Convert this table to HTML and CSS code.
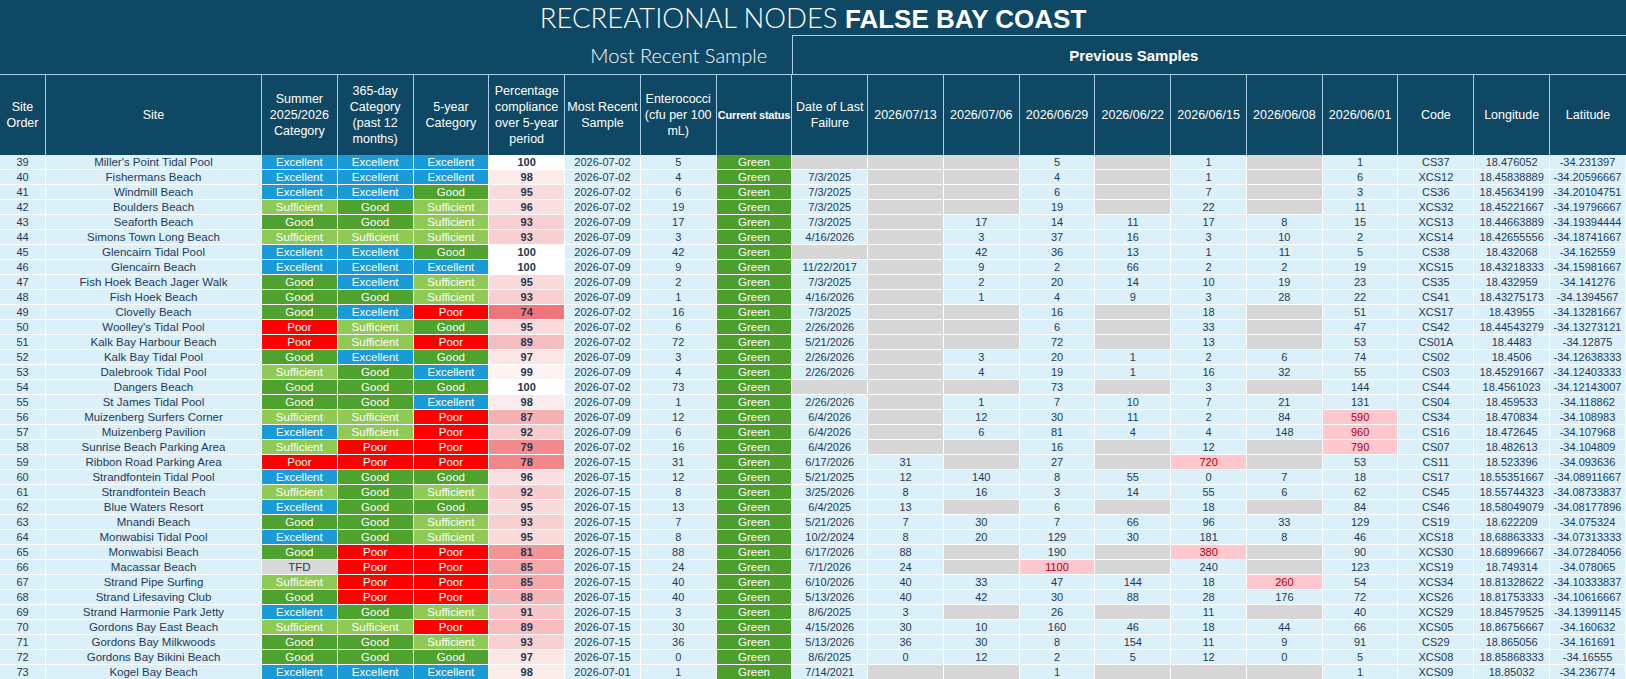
FILE: index.html
```html
<!DOCTYPE html>
<html lang="en">
<head>
<meta charset="utf-8">
<title>Recreational Nodes False Bay Coast</title>
<link rel="stylesheet" href="styles.css">
</head>
<body>
<table class="sheet">
<colgroup><col class="c-ord"><col class="c-site"><col span="18"></colgroup>
<thead>
<tr class="r-title"><th colspan="20" class="title"><span class="light">RECREATIONAL NODES </span><b>FALSE BAY COAST</b></th></tr>
<tr class="r-sub"><th colspan="6" class="blank"></th><th colspan="3" class="mrs">Most Recent Sample</th><th colspan="9" class="prev">Previous Samples</th><th colspan="2" class="prev-end"></th></tr>
<tr class="r-head">
<th>Site<br>Order</th><th>Site</th><th>Summer<br>2025/2026<br>Category</th><th>365-day<br>Category<br>(past 12<br>months)</th><th>5-year<br>Category</th><th>Percentage<br>compliance<br>over 5-year<br>period</th><th>Most Recent<br>Sample</th><th>Enterococci<br>(cfu per 100<br>mL)</th><th class="cur">Current status</th><th>Date of Last<br>Failure</th><th>2026/07/13</th><th>2026/07/06</th><th>2026/06/29</th><th>2026/06/22</th><th>2026/06/15</th><th>2026/06/08</th><th>2026/06/01</th><th>Code</th><th>Longitude</th><th class="last">Latitude</th>
</tr>
</thead>
<tbody>
<tr><td>39</td><td class="site">Miller's Point Tidal Pool</td><td class="ex">Excellent</td><td class="ex">Excellent</td><td class="ex">Excellent</td><td class="pc" style="background:#ffffff">100</td><td>2026-07-02</td><td>5</td><td class="st">Green</td><td class="na"></td><td class="na"></td><td class="na"></td><td>5</td><td class="na"></td><td>1</td><td class="na"></td><td>1</td><td>CS37</td><td>18.476052</td><td>-34.231397</td></tr>
<tr><td>40</td><td class="site">Fishermans Beach</td><td class="ex">Excellent</td><td class="ex">Excellent</td><td class="ex">Excellent</td><td class="pc" style="background:#fcebeb">98</td><td>2026-07-02</td><td>4</td><td class="st">Green</td><td>7/3/2025</td><td class="na"></td><td class="na"></td><td>4</td><td class="na"></td><td>1</td><td class="na"></td><td>6</td><td>XCS12</td><td>18.45838889</td><td>-34.20596667</td></tr>
<tr><td>41</td><td class="site">Windmill Beach</td><td class="ex">Excellent</td><td class="ex">Excellent</td><td class="gd">Good</td><td class="pc" style="background:#fadbdc">95</td><td>2026-07-02</td><td>6</td><td class="st">Green</td><td>7/3/2025</td><td class="na"></td><td class="na"></td><td>6</td><td class="na"></td><td>7</td><td class="na"></td><td>3</td><td>CS36</td><td>18.45634199</td><td>-34.20104751</td></tr>
<tr><td>42</td><td class="site">Boulders Beach</td><td class="sf">Sufficient</td><td class="gd">Good</td><td class="sf">Sufficient</td><td class="pc" style="background:#fbe0e1">96</td><td>2026-07-02</td><td>19</td><td class="st">Green</td><td>7/3/2025</td><td class="na"></td><td class="na"></td><td>19</td><td class="na"></td><td>22</td><td class="na"></td><td>11</td><td>XCS32</td><td>18.45221667</td><td>-34.19796667</td></tr>
<tr><td>43</td><td class="site">Seaforth Beach</td><td class="gd">Good</td><td class="gd">Good</td><td class="sf">Sufficient</td><td class="pc" style="background:#f9d0d1">93</td><td>2026-07-09</td><td>17</td><td class="st">Green</td><td>7/3/2025</td><td class="na"></td><td>17</td><td>14</td><td>11</td><td>17</td><td>8</td><td>15</td><td>XCS13</td><td>18.44663889</td><td>-34.19394444</td></tr>
<tr><td>44</td><td class="site">Simons Town Long Beach</td><td class="sf">Sufficient</td><td class="sf">Sufficient</td><td class="sf">Sufficient</td><td class="pc" style="background:#f9d0d1">93</td><td>2026-07-09</td><td>3</td><td class="st">Green</td><td>4/16/2026</td><td class="na"></td><td>3</td><td>37</td><td>16</td><td>3</td><td>10</td><td>2</td><td>XCS14</td><td>18.42655556</td><td>-34.18741667</td></tr>
<tr><td>45</td><td class="site">Glencairn Tidal Pool</td><td class="ex">Excellent</td><td class="ex">Excellent</td><td class="gd">Good</td><td class="pc" style="background:#ffffff">100</td><td>2026-07-09</td><td>42</td><td class="st">Green</td><td class="na"></td><td class="na"></td><td>42</td><td>36</td><td>13</td><td>1</td><td>11</td><td>5</td><td>CS38</td><td>18.432068</td><td>-34.162559</td></tr>
<tr><td>46</td><td class="site">Glencairn Beach</td><td class="ex">Excellent</td><td class="ex">Excellent</td><td class="ex">Excellent</td><td class="pc" style="background:#ffffff">100</td><td>2026-07-09</td><td>9</td><td class="st">Green</td><td>11/22/2017</td><td class="na"></td><td>9</td><td>2</td><td>66</td><td>2</td><td>2</td><td>19</td><td>XCS15</td><td>18.43218333</td><td>-34.15981667</td></tr>
<tr><td>47</td><td class="site">Fish Hoek Beach Jager Walk</td><td class="gd">Good</td><td class="ex">Excellent</td><td class="sf">Sufficient</td><td class="pc" style="background:#fadbdc">95</td><td>2026-07-09</td><td>2</td><td class="st">Green</td><td>7/3/2025</td><td class="na"></td><td>2</td><td>20</td><td>14</td><td>10</td><td>19</td><td>23</td><td>CS35</td><td>18.432959</td><td>-34.141276</td></tr>
<tr><td>48</td><td class="site">Fish Hoek Beach</td><td class="gd">Good</td><td class="gd">Good</td><td class="sf">Sufficient</td><td class="pc" style="background:#f9d0d1">93</td><td>2026-07-09</td><td>1</td><td class="st">Green</td><td>4/16/2026</td><td class="na"></td><td>1</td><td>4</td><td>9</td><td>3</td><td>28</td><td>22</td><td>CS41</td><td>18.43275173</td><td>-34.1394567</td></tr>
<tr><td>49</td><td class="site">Clovelly Beach</td><td class="gd">Good</td><td class="ex">Excellent</td><td class="pr">Poor</td><td class="pc" style="background:#ef7678">74</td><td>2026-07-02</td><td>16</td><td class="st">Green</td><td>7/3/2025</td><td class="na"></td><td class="na"></td><td>16</td><td class="na"></td><td>18</td><td class="na"></td><td>51</td><td>XCS17</td><td>18.43955</td><td>-34.13281667</td></tr>
<tr><td>50</td><td class="site">Woolley's Tidal Pool</td><td class="pr">Poor</td><td class="sf">Sufficient</td><td class="gd">Good</td><td class="pc" style="background:#fadbdc">95</td><td>2026-07-02</td><td>6</td><td class="st">Green</td><td>2/26/2026</td><td class="na"></td><td class="na"></td><td>6</td><td class="na"></td><td>33</td><td class="na"></td><td>47</td><td>CS42</td><td>18.44543279</td><td>-34.13273121</td></tr>
<tr><td>51</td><td class="site">Kalk Bay Harbour Beach</td><td class="pr">Poor</td><td class="sf">Sufficient</td><td class="pr">Poor</td><td class="pc" style="background:#f7bcbd">89</td><td>2026-07-02</td><td>72</td><td class="st">Green</td><td>5/21/2026</td><td class="na"></td><td class="na"></td><td>72</td><td class="na"></td><td>13</td><td class="na"></td><td>53</td><td>CS01A</td><td>18.4483</td><td>-34.12875</td></tr>
<tr><td>52</td><td class="site">Kalk Bay Tidal Pool</td><td class="gd">Good</td><td class="ex">Excellent</td><td class="gd">Good</td><td class="pc" style="background:#fbe5e5">97</td><td>2026-07-09</td><td>3</td><td class="st">Green</td><td>2/26/2026</td><td class="na"></td><td>3</td><td>20</td><td>1</td><td>2</td><td>6</td><td>74</td><td>CS02</td><td>18.4506</td><td>-34.12638333</td></tr>
<tr><td>53</td><td class="site">Dalebrook Tidal Pool</td><td class="sf">Sufficient</td><td class="gd">Good</td><td class="ex">Excellent</td><td class="pc" style="background:#fdf3f3">99</td><td>2026-07-09</td><td>4</td><td class="st">Green</td><td>2/26/2026</td><td class="na"></td><td>4</td><td>19</td><td>1</td><td>16</td><td>32</td><td>55</td><td>CS03</td><td>18.45291667</td><td>-34.12403333</td></tr>
<tr><td>54</td><td class="site">Dangers Beach</td><td class="gd">Good</td><td class="gd">Good</td><td class="gd">Good</td><td class="pc" style="background:#ffffff">100</td><td>2026-07-02</td><td>73</td><td class="st">Green</td><td class="na"></td><td class="na"></td><td class="na"></td><td>73</td><td class="na"></td><td>3</td><td class="na"></td><td>144</td><td>CS44</td><td>18.4561023</td><td>-34.12143007</td></tr>
<tr><td>55</td><td class="site">St James Tidal Pool</td><td class="gd">Good</td><td class="gd">Good</td><td class="ex">Excellent</td><td class="pc" style="background:#fcebeb">98</td><td>2026-07-09</td><td>1</td><td class="st">Green</td><td>2/26/2026</td><td class="na"></td><td>1</td><td>7</td><td>10</td><td>7</td><td>21</td><td>131</td><td>CS04</td><td>18.459533</td><td>-34.118862</td></tr>
<tr><td>56</td><td class="site">Muizenberg Surfers Corner</td><td class="sf">Sufficient</td><td class="sf">Sufficient</td><td class="pr">Poor</td><td class="pc" style="background:#f6b2b3">87</td><td>2026-07-09</td><td>12</td><td class="st">Green</td><td>6/4/2026</td><td class="na"></td><td>12</td><td>30</td><td>11</td><td>2</td><td>84</td><td class="hi">590</td><td>CS34</td><td>18.470834</td><td>-34.108983</td></tr>
<tr><td>57</td><td class="site">Muizenberg Pavilion</td><td class="ex">Excellent</td><td class="sf">Sufficient</td><td class="pr">Poor</td><td class="pc" style="background:#f8cbcc">92</td><td>2026-07-09</td><td>6</td><td class="st">Green</td><td>6/4/2026</td><td class="na"></td><td>6</td><td>81</td><td>4</td><td>4</td><td>148</td><td class="hi">960</td><td>CS16</td><td>18.472645</td><td>-34.107968</td></tr>
<tr><td>58</td><td class="site">Sunrise Beach Parking Area</td><td class="sf">Sufficient</td><td class="pr">Poor</td><td class="pr">Poor</td><td class="pc" style="background:#f18c8e">79</td><td>2026-07-02</td><td>16</td><td class="st">Green</td><td>6/4/2026</td><td class="na"></td><td class="na"></td><td>16</td><td class="na"></td><td>12</td><td class="na"></td><td class="hi">790</td><td>CS07</td><td>18.482613</td><td>-34.104809</td></tr>
<tr><td>59</td><td class="site">Ribbon Road Parking Area</td><td class="pr">Poor</td><td class="pr">Poor</td><td class="pr">Poor</td><td class="pc" style="background:#f18789">78</td><td>2026-07-15</td><td>31</td><td class="st">Green</td><td>6/17/2026</td><td>31</td><td class="na"></td><td>27</td><td class="na"></td><td class="hi">720</td><td class="na"></td><td>53</td><td>CS11</td><td>18.523396</td><td>-34.093636</td></tr>
<tr><td>60</td><td class="site">Strandfontein Tidal Pool</td><td class="ex">Excellent</td><td class="gd">Good</td><td class="gd">Good</td><td class="pc" style="background:#fbe0e1">96</td><td>2026-07-15</td><td>12</td><td class="st">Green</td><td>5/21/2025</td><td>12</td><td>140</td><td>8</td><td>55</td><td>0</td><td>7</td><td>18</td><td>CS17</td><td>18.55351667</td><td>-34.08911667</td></tr>
<tr><td>61</td><td class="site">Strandfontein Beach</td><td class="sf">Sufficient</td><td class="gd">Good</td><td class="sf">Sufficient</td><td class="pc" style="background:#f8cbcc">92</td><td>2026-07-15</td><td>8</td><td class="st">Green</td><td>3/25/2026</td><td>8</td><td>16</td><td>3</td><td>14</td><td>55</td><td>6</td><td>62</td><td>CS45</td><td>18.55744323</td><td>-34.08733837</td></tr>
<tr><td>62</td><td class="site">Blue Waters Resort</td><td class="ex">Excellent</td><td class="gd">Good</td><td class="gd">Good</td><td class="pc" style="background:#fadbdc">95</td><td>2026-07-15</td><td>13</td><td class="st">Green</td><td>6/4/2025</td><td>13</td><td class="na"></td><td>6</td><td class="na"></td><td>18</td><td class="na"></td><td>84</td><td>CS46</td><td>18.58049079</td><td>-34.08177896</td></tr>
<tr><td>63</td><td class="site">Mnandi Beach</td><td class="gd">Good</td><td class="gd">Good</td><td class="sf">Sufficient</td><td class="pc" style="background:#f9d0d1">93</td><td>2026-07-15</td><td>7</td><td class="st">Green</td><td>5/21/2026</td><td>7</td><td>30</td><td>7</td><td>66</td><td>96</td><td>33</td><td>129</td><td>CS19</td><td>18.622209</td><td>-34.075324</td></tr>
<tr><td>64</td><td class="site">Monwabisi Tidal Pool</td><td class="ex">Excellent</td><td class="gd">Good</td><td class="sf">Sufficient</td><td class="pc" style="background:#fadbdc">95</td><td>2026-07-15</td><td>8</td><td class="st">Green</td><td>10/2/2024</td><td>8</td><td>20</td><td>129</td><td>30</td><td>181</td><td>8</td><td>46</td><td>XCS18</td><td>18.68863333</td><td>-34.07313333</td></tr>
<tr><td>65</td><td class="site">Monwabisi Beach</td><td class="gd">Good</td><td class="pr">Poor</td><td class="pr">Poor</td><td class="pc" style="background:#f39597">81</td><td>2026-07-15</td><td>88</td><td class="st">Green</td><td>6/17/2026</td><td>88</td><td class="na"></td><td>190</td><td class="na"></td><td class="hi">380</td><td class="na"></td><td>90</td><td>XCS30</td><td>18.68996667</td><td>-34.07284056</td></tr>
<tr><td>66</td><td class="site">Macassar Beach</td><td class="tfd">TFD</td><td class="pr">Poor</td><td class="pr">Poor</td><td class="pc" style="background:#f5a8aa">85</td><td>2026-07-15</td><td>24</td><td class="st">Green</td><td>7/1/2026</td><td>24</td><td class="na"></td><td class="hi">1100</td><td class="na"></td><td>240</td><td class="na"></td><td>123</td><td>XCS19</td><td>18.749314</td><td>-34.078065</td></tr>
<tr><td>67</td><td class="site">Strand Pipe Surfing</td><td class="sf">Sufficient</td><td class="pr">Poor</td><td class="pr">Poor</td><td class="pc" style="background:#f5a8aa">85</td><td>2026-07-15</td><td>40</td><td class="st">Green</td><td>6/10/2026</td><td>40</td><td>33</td><td>47</td><td>144</td><td>18</td><td class="hi">260</td><td>54</td><td>XCS34</td><td>18.81328622</td><td>-34.10333837</td></tr>
<tr><td>68</td><td class="site">Strand Lifesaving Club</td><td class="gd">Good</td><td class="pr">Poor</td><td class="pr">Poor</td><td class="pc" style="background:#f6b7b8">88</td><td>2026-07-15</td><td>40</td><td class="st">Green</td><td>5/13/2026</td><td>40</td><td>42</td><td>30</td><td>88</td><td>28</td><td>176</td><td>72</td><td>XCS26</td><td>18.81753333</td><td>-34.10616667</td></tr>
<tr><td>69</td><td class="site">Strand Harmonie Park Jetty</td><td class="ex">Excellent</td><td class="gd">Good</td><td class="sf">Sufficient</td><td class="pc" style="background:#f8c6c7">91</td><td>2026-07-15</td><td>3</td><td class="st">Green</td><td>8/6/2025</td><td>3</td><td class="na"></td><td>26</td><td class="na"></td><td>11</td><td class="na"></td><td>40</td><td>XCS29</td><td>18.84579525</td><td>-34.13991145</td></tr>
<tr><td>70</td><td class="site">Gordons Bay East Beach</td><td class="sf">Sufficient</td><td class="sf">Sufficient</td><td class="pr">Poor</td><td class="pc" style="background:#f7bcbd">89</td><td>2026-07-15</td><td>30</td><td class="st">Green</td><td>4/15/2026</td><td>30</td><td>10</td><td>160</td><td>46</td><td>18</td><td>44</td><td>66</td><td>XCS05</td><td>18.86756667</td><td>-34.160632</td></tr>
<tr><td>71</td><td class="site">Gordons Bay Milkwoods</td><td class="gd">Good</td><td class="gd">Good</td><td class="sf">Sufficient</td><td class="pc" style="background:#f9d0d1">93</td><td>2026-07-15</td><td>36</td><td class="st">Green</td><td>5/13/2026</td><td>36</td><td>30</td><td>8</td><td>154</td><td>11</td><td>9</td><td>91</td><td>CS29</td><td>18.865056</td><td>-34.161691</td></tr>
<tr><td>72</td><td class="site">Gordons Bay Bikini Beach</td><td class="gd">Good</td><td class="gd">Good</td><td class="gd">Good</td><td class="pc" style="background:#fbe5e5">97</td><td>2026-07-15</td><td>0</td><td class="st">Green</td><td>8/6/2025</td><td>0</td><td>12</td><td>2</td><td>5</td><td>12</td><td>0</td><td>5</td><td>XCS08</td><td>18.85868333</td><td>-34.16555</td></tr>
<tr><td>73</td><td class="site">Kogel Bay Beach</td><td class="ex">Excellent</td><td class="ex">Excellent</td><td class="ex">Excellent</td><td class="pc" style="background:#fcebeb">98</td><td>2026-07-01</td><td>1</td><td class="st">Green</td><td>7/14/2021</td><td class="na"></td><td class="na"></td><td>1</td><td class="na"></td><td class="na"></td><td class="na"></td><td>1</td><td>XCS09</td><td>18.85032</td><td>-34.236774</td></tr>
</tbody>
</table>
</body>
</html>
```

FILE: styles.css
```css
html, body {
  margin: 0;
  padding: 0;
  background: #ffffff;
}

body {
  font-family: "Liberation Sans", Arial, sans-serif;
  overflow: hidden;
}

.sheet {
  width: 1626px;
  table-layout: fixed;
  border-collapse: separate;
  border-spacing: 0;
}

.c-ord { width: 46px; }
.c-site { width: 216px; }

/* ---------- header ---------- */
.sheet thead th {
  background: #0f4864;
  color: #ffffff;
  padding: 0;
  font-weight: normal;
  text-align: center;
  vertical-align: middle;
  white-space: nowrap;
  overflow: hidden;
}

.r-title th { height: 35px; }

.title {
  font-size: 26px;
  padding-top: 2px;
}

.title .light {
  font-family: "Lato", "Liberation Sans", sans-serif;
  font-weight: 300;
  font-size: 27.5px;
}

.title b {
  font-weight: bold;
}

.r-sub th { height: 38px; }

.sheet thead th.mrs {
  font-family: "Lato", "Liberation Sans", sans-serif;
  font-weight: 300;
  font-size: 20px;
}

.sheet thead th.prev {
  font-size: 15px;
  font-weight: bold;
  border-top: 1px solid #a9cde2;
  border-left: 1px solid #a9cde2;
}

.sheet thead th.prev-end {
  border-top: 1px solid #a9cde2;
}

.r-head th {
  height: 80px;
  font-size: 12.5px;
  line-height: 16px;
  border-top: 1px solid #a9cde2;
  border-right: 1px solid #a9cde2;
}

.r-head th.last { border-right: 0; }

.sheet thead .r-head th.cur {
  font-weight: bold;
  font-size: 11px;
  letter-spacing: -0.2px;
}

/* ---------- body ---------- */
.sheet tbody tr { height: 15px; }

.sheet tbody td {
  background: #dcf0fa;
  color: #1c3a5a;
  font-size: 11px;
  line-height: 13px;
  padding: 0;
  text-align: center;
  vertical-align: middle;
  white-space: nowrap;
  overflow: hidden;
  border-right: 1px solid #ffffff;
  border-bottom: 1px solid #ffffff;
}

.sheet tbody td.site { font-size: 11.5px; }

.sheet tbody td.ex,
.sheet tbody td.gd,
.sheet tbody td.sf,
.sheet tbody td.pr,
.sheet tbody td.st {
  color: #ffffff;
  font-size: 11.5px;
}

.sheet tbody td.ex { background: #1a9ad6; }
.sheet tbody td.gd { background: #4ea22e; }
.sheet tbody td.sf { background: #8fca55; }
.sheet tbody td.pr { background: #ff0000; }
.sheet tbody td.st { background: #4e9e2c; }

.sheet tbody td.tfd {
  background: #d9d9d9;
  color: #2a3a4e;
  font-size: 11.5px;
}

.sheet tbody td.na { background: #d7d7d7; }

.sheet tbody td.hi {
  background: #ffc7ce;
  color: #b0000a;
}

.sheet tbody td.pc {
  font-weight: bold;
  color: #24364f;
}
```
